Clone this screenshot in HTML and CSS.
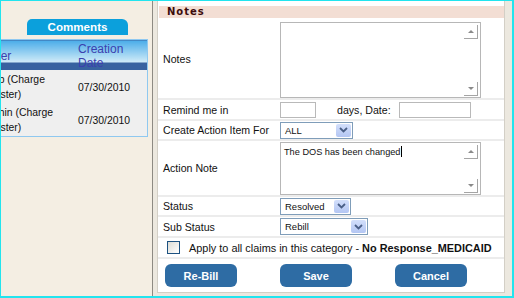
FILE: index.html
```html
<!DOCTYPE html>
<html lang="en">
<head>
    <meta charset="UTF-8">
    <title>Claim Notes</title>
    <link rel="stylesheet" href="styles.css">
</head>
<body>
    <div class="screen">
        <aside class="side">
            <div class="tab">Comments</div>
            <table class="comments">
                <thead>
                    <tr>
                        <th class="c-user">User</th>
                        <th class="c-date">Creation Date</th>
                    </tr>
                </thead>
                <tbody>
                    <tr>
                        <td>Bob (Charge Master)</td>
                        <td>07/30/2010</td>
                    </tr>
                    <tr>
                        <td>Nithin (Charge Master)</td>
                        <td>07/30/2010</td>
                    </tr>
                </tbody>
            </table>
        </aside>

        <main class="main">
            <div class="form">
                <div class="notes-head">Notes</div>

                <div class="row row-notes">
                    <div class="label">Notes</div>
                    <div class="ta ta-notes">
                        <div class="txt"></div>
                        <div class="bar">
                            <span class="arrow up"></span>
                            <span class="arrow down"></span>
                        </div>
                    </div>
                </div>

                <div class="row row-remind">
                    <div class="label">Remind me in</div>
                    <div class="inp inp-days"></div>
                    <span class="days">days, Date:</span>
                    <div class="inp inp-date"></div>
                </div>

                <div class="row row-create">
                    <div class="label">Create Action Item For</div>
                    <div class="sel sel-all">
                        <span>ALL</span>
                        <i class="drop"><svg width="9" height="6" viewBox="0 0 9 6"><path d="M1 1 L4.5 4.5 L8 1" fill="none" stroke="#4a5f87" stroke-width="1.8"/></svg></i>
                    </div>
                </div>

                <div class="row row-action">
                    <div class="label">Action Note</div>
                    <div class="ta ta-action">
                        <div class="txt">The DOS has been changed<span class="caret"></span></div>
                        <div class="bar">
                            <span class="arrow up"></span>
                            <span class="arrow down"></span>
                        </div>
                    </div>
                </div>

                <div class="row row-status">
                    <div class="label">Status</div>
                    <div class="sel sel-status">
                        <span>Resolved</span>
                        <i class="drop"><svg width="9" height="6" viewBox="0 0 9 6"><path d="M1 1 L4.5 4.5 L8 1" fill="none" stroke="#4a5f87" stroke-width="1.8"/></svg></i>
                    </div>
                </div>

                <div class="row row-sub">
                    <div class="label">Sub Status</div>
                    <div class="sel sel-sub">
                        <span>Rebill</span>
                        <i class="drop"><svg width="9" height="6" viewBox="0 0 9 6"><path d="M1 1 L4.5 4.5 L8 1" fill="none" stroke="#4a5f87" stroke-width="1.8"/></svg></i>
                    </div>
                </div>

                <div class="row row-check">
                    <span class="cb"></span>
                    <span class="apply">Apply to all claims in this category - <b>No Response_MEDICAID</b></span>
                </div>

                <div class="buttons">
                    <button class="btn">Re-Bill</button>
                    <button class="btn">Save</button>
                    <button class="btn">Cancel</button>
                </div>
            </div>
        </main>
    </div>
</body>
</html>
```

FILE: styles.css
```css
body {
    margin: 0;
    font-family: "Liberation Sans", Arial, sans-serif;
    background-color: #ffffff;
}
.screen {
    width: 514px;
    height: 298px;
    box-sizing: border-box;
    border: 1px solid #22e4ee;
    border-right-width: 2px;
    border-bottom-width: 2px;
    display: flex;
    overflow: hidden;
}

/* left comments panel */
.side {
    width: 151px;
    flex: none;
    overflow: hidden;
    background-color: #f4eee3;
}
.tab {
    width: 101px;
    height: 16px;
    margin: 18px 0 4px 26px;
    background-color: #0ba0dc;
    border-radius: 5px 6px 0 0;
    color: white;
    font-weight: bold;
    font-size: 11.6px;
    line-height: 16px;
    text-align: center;
}
.comments {
    margin-left: -21px;
    width: 168px;
    border-collapse: collapse;
    border: 1px solid #8fc8f0;
    table-layout: fixed;
}
.comments th {
    padding: 2px 0 0 5px;
    height: 28px;
    line-height: 14px;
    font-size: 12px;
    font-weight: normal;
    text-align: left;
    color: #3b40ae;
    background: linear-gradient(to bottom, #4aace9 0, #d2ecf8 22px, #3862a0 22px, #3862a0 100%);
}
.comments th.c-user {
    width: 87px;
}
.comments td {
    padding: 2px 0 1px 5px;
    font-size: 10.4px;
    line-height: 15px;
    color: #111;
    background-color: #efefef;
}

/* right notes form */
.main {
    flex: 1;
    display: flex;
    border-left: 1px solid #8d8a83;
    background-color: #ece8df;
    padding: 0 7px 3px 4px;
}
.form {
    flex: 1;
    border: 1px solid #d3cfc6;
    border-top: none;
    background-color: white;
    padding-top: 5px;
    display: flex;
    flex-direction: column;
}
.notes-head {
    height: 12px;
    margin: 0 0 2px 1px;
    padding-left: 8px;
    background-color: #f3ded4;
    font-family: "DejaVu Sans", Verdana, sans-serif;
    font-weight: bold;
    font-size: 10px;
    line-height: 12px;
    letter-spacing: 1px;
    color: #3d0c0c;
}
.row {
    display: flex;
    align-items: center;
    border-bottom: 2px solid #ececec;
}
.row-notes { height: 78px; }
.row-remind { height: 19px; }
.row-create { height: 18px; }
.row-action { height: 54px; }
.row-status { height: 18px; }
.row-sub { height: 19px; }
.row-check { height: 19px; }
.label {
    width: 117px;
    flex: none;
    padding-left: 5px;
    font-size: 10.6px;
    color: #111;
}

/* fake textareas */
.ta {
    width: 199px;
    border: 1px solid #b7b7b7;
    display: flex;
}
.ta-notes {
    height: 74px;
    align-self: flex-end;
}
.ta-action { height: 51px; }
.ta .txt {
    flex: 1;
    padding: 3px 3px;
    font-size: 9.2px;
    line-height: 11px;
    color: #111;
}
.caret {
    display: inline-block;
    width: 1px;
    height: 11px;
    margin-left: 1px;
    vertical-align: -2px;
    background-color: #000;
}
.ta .bar {
    width: 15px;
    display: flex;
    flex-direction: column;
    justify-content: space-between;
    padding: 2px 1px 1px 0;
}
.arrow {
    width: 13px;
    height: 13px;
    border-right: 1px solid #a5a5a5;
    border-bottom: 1px solid #a5a5a5;
    display: flex;
    align-items: center;
    justify-content: center;
}
.arrow::after {
    content: "";
    border-left: 3px solid transparent;
    border-right: 3px solid transparent;
}
.arrow.up::after { border-bottom: 3px solid #8a8a8a; }
.arrow.down::after { border-top: 3px solid #8a8a8a; }

/* inputs and selects */
.inp {
    height: 14px;
    border: 1px solid #b9b9b9;
}
.inp-days {
    width: 34px;
    margin-right: 21px;
}
.inp-date { width: 70px; }
.days {
    font-size: 10.6px;
    color: #111;
    margin-right: 8px;
}
.sel {
    height: 15px;
    border: 1px solid #7f9db9;
    display: flex;
    justify-content: space-between;
    font-size: 9.5px;
    line-height: 15px;
    color: #111;
}
.sel span { padding-left: 4px; }
.sel-all { width: 71px; }
.sel-status { width: 69px; }
.sel-sub { width: 86px; }
.drop {
    width: 15px;
    margin: 1px;
    border-radius: 2px;
    background: linear-gradient(to bottom, #d3dffb, #b3c6f3);
    display: flex;
    align-items: center;
    justify-content: center;
}

/* apply row */
.cb {
    width: 11px;
    height: 11px;
    margin-left: 9px;
    border: 1px solid #1d5281;
    background: linear-gradient(135deg, #dcdcd5, #ffffff);
}
.apply {
    margin-left: 9px;
    font-size: 10.9px;
    color: #111;
}

/* buttons */
.buttons {
    flex: 1;
    display: flex;
    gap: 43px;
    padding: 5px 0 0 7px;
}
.btn {
    width: 72px;
    height: 23px;
    border: none;
    border-radius: 6px;
    background-color: #2e6ca4;
    color: white;
    font-family: "Liberation Sans", Arial, sans-serif;
    font-weight: bold;
    font-size: 11px;
    cursor: pointer;
}
```
